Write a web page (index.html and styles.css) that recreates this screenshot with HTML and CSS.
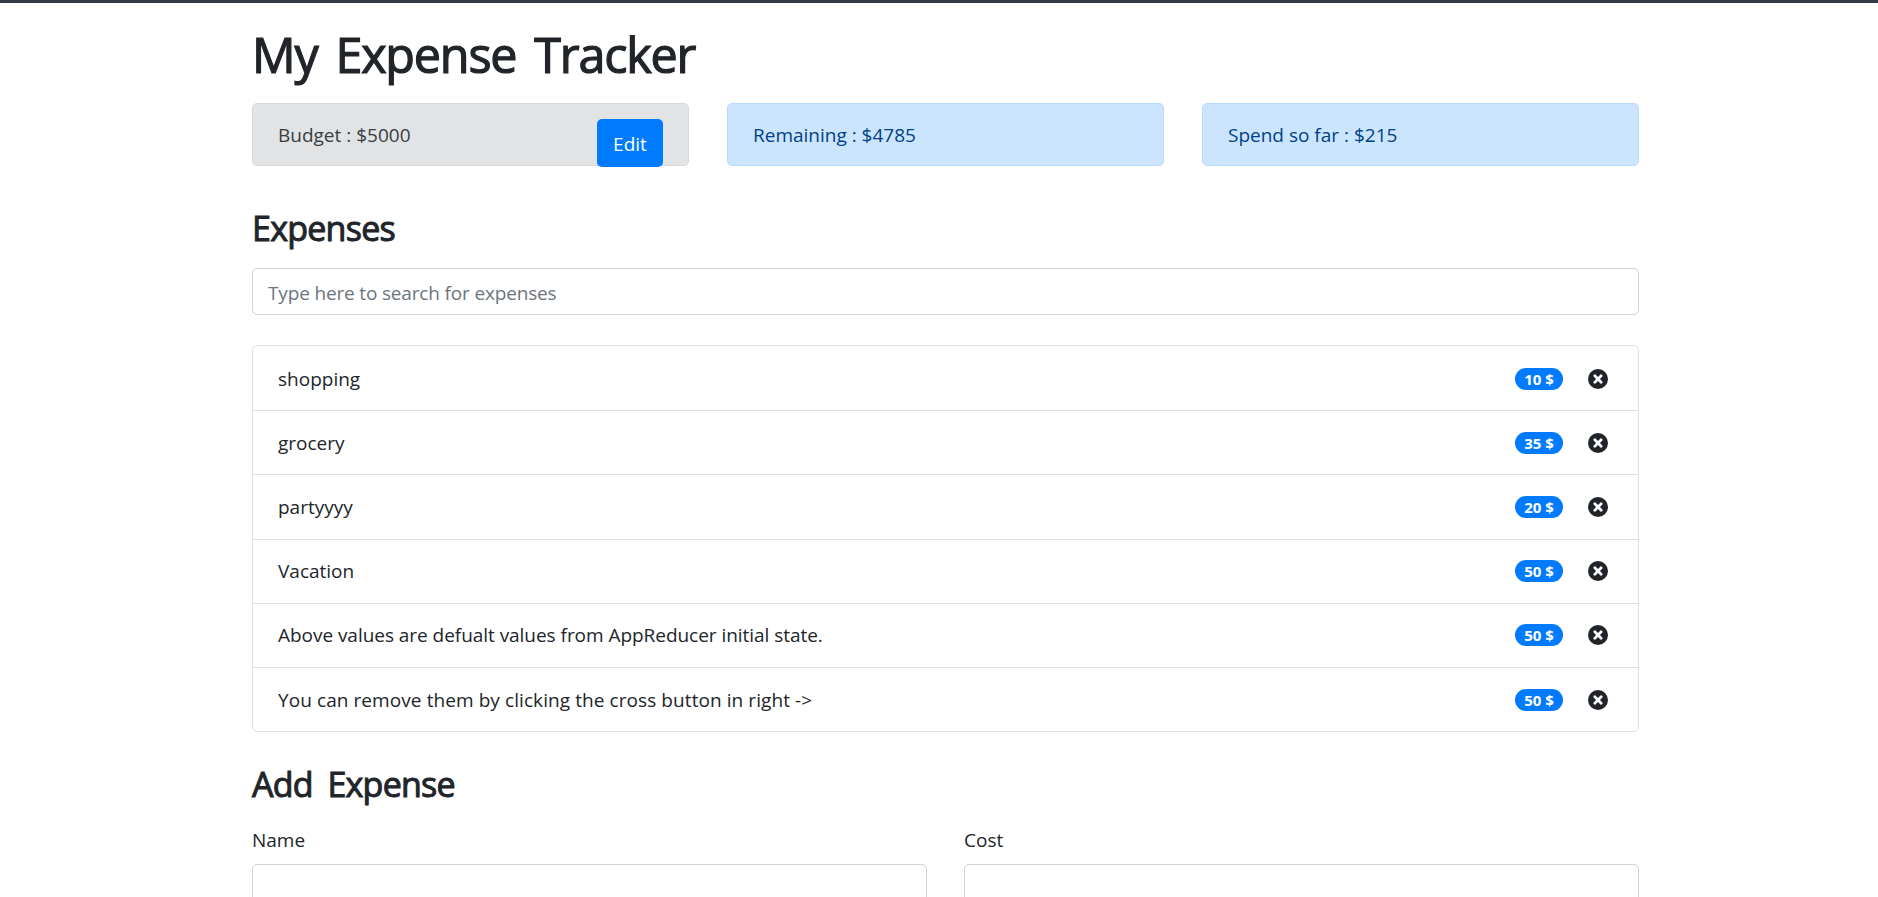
FILE: index.html
```html
<!DOCTYPE html>
<html lang="en">
<head>
<meta charset="utf-8">
<title>My Expense Tracker</title>
<link rel="stylesheet" href="styles.css">
</head>
<body>
<svg class="defs" aria-hidden="true"><symbol id="remove" viewBox="0 0 1024 1024"><path fill-rule="evenodd" d="M512 0a512 512 0 1 0 0 1024A512 512 0 0 0 512 0ZM512 412L640 284Q680 250 720 290Q774 340 735 387L612 512L735 637Q774 684 720 734Q680 774 640 740L512 612L384 740Q344 774 304 734Q250 684 289 637L412 512L289 387Q250 340 304 290Q344 250 384 284Z"/></symbol></svg>
<main class="container">
  <h1 class="title">My Expense Tracker</h1>
  <div class="summary">
    <div class="alert alert-secondary"><span>Budget : $5000</span><button class="btn">Edit</button></div>
    <div class="alert alert-primary"><span>Remaining : $4785</span></div>
    <div class="alert alert-primary"><span>Spend so far : $215</span></div>
  </div>
  <h3 class="heading">Expenses</h3>
  <input class="search" type="text" placeholder="Type here to search for expenses">
  <ul class="list">
    <li class="item"><span class="name">shopping</span><span class="badge">10 $</span><svg class="icon"><use href="#remove"/></svg></li>
    <li class="item"><span class="name">grocery</span><span class="badge">35 $</span><svg class="icon"><use href="#remove"/></svg></li>
    <li class="item"><span class="name">partyyyy</span><span class="badge">20 $</span><svg class="icon"><use href="#remove"/></svg></li>
    <li class="item"><span class="name">Vacation</span><span class="badge">50 $</span><svg class="icon"><use href="#remove"/></svg></li>
    <li class="item"><span class="name snug">Above values are defualt values from AppReducer initial state.</span><span class="badge">50 $</span><svg class="icon"><use href="#remove"/></svg></li>
    <li class="item"><span class="name loose">You can remove them by clicking the cross button in right -&gt;</span><span class="badge">50 $</span><svg class="icon"><use href="#remove"/></svg></li>
  </ul>
  <h3 class="heading add">Add Expense</h3>
  <form class="form">
    <label class="field">Name<input type="text"></label>
    <label class="field">Cost<input type="text"></label>
  </form>
</main>
</body>
</html>
```
FILE: styles.css
```css
* { box-sizing: border-box; }
html, body { height: 100%; margin: 0; }
body {
  overflow: hidden;
  border-top: 3px solid #343a46;
  background: #fff;
  color: #212529;
  font: 19px/30px "Open Sans", "Noto Sans", sans-serif;
}
.defs { display: none; }
.container { width: 1387px; margin-left: 252px; }
.title { margin: 0; padding-top: 21px; height: 100px; font-size: 48.5px; line-height: 60px; font-weight: 400; letter-spacing: -1.2px; word-spacing: 6.5px; -webkit-text-stroke: 1.2px #212529; }
.summary { display: grid; grid-template-columns: repeat(3, 437px); justify-content: space-between; }
.alert { display: flex; justify-content: space-between; height: 63px; padding: 15px 25px; border: 1px solid; border-radius: 5px; }
.alert span { padding-top: 1px; }
.alert-secondary { color: #383d41; background: #e2e3e5; border-color: #d6d8db; }
.alert-primary { color: #004085; background: #cce5ff; border-color: #b8daff; }
.btn { width: 66px; height: 48px; padding: 2px 0 0; border: 0; border-radius: 5px; background: #007bff; color: #fff; font: inherit; }
.heading { margin: 41px 0 0; height: 61px; font-size: 34px; line-height: 42px; font-weight: 400; letter-spacing: -.75px; -webkit-text-stroke: 1px #212529; }
.search { display: block; width: 100%; height: 47px; padding: 2px 15px 0; border: 1px solid #ced4da; border-radius: 5px; font: inherit; letter-spacing: -.16px; }
.search::placeholder { color: #6c757d; opacity: 1; }
.list { list-style: none; margin: 30px 0 0; padding: 1px 0 0; border: 1px solid #dfdfdf; border-radius: 5px; }
.item { display: flex; align-items: center; height: 64.2px; padding: 0 30px 0 25px; border-bottom: 1px solid #dfdfdf; }
.item:last-child { border-bottom: 0; margin-bottom: -1.5px; }
.name { flex: 1; }
.snug { letter-spacing: -.04px; }
.loose { letter-spacing: .08px; }
.badge { width: 48px; height: 22px; margin-right: 25px; border-radius: 11px; background: #007bff; color: #fff; font-size: 15px; font-weight: 700; line-height: 22px; text-align: center; }
.icon { width: 20px; height: 20px; fill: #212529; }
.add { margin-top: 31.5px; word-spacing: 6.5px; }
.form { display: grid; grid-template-columns: 675px 675px; justify-content: space-between; }
.field { display: flex; flex-direction: column; gap: 9px; padding-top: 1px; }
.field input { height: 48px; border: 1px solid #ced4da; border-radius: 5px; }
```
